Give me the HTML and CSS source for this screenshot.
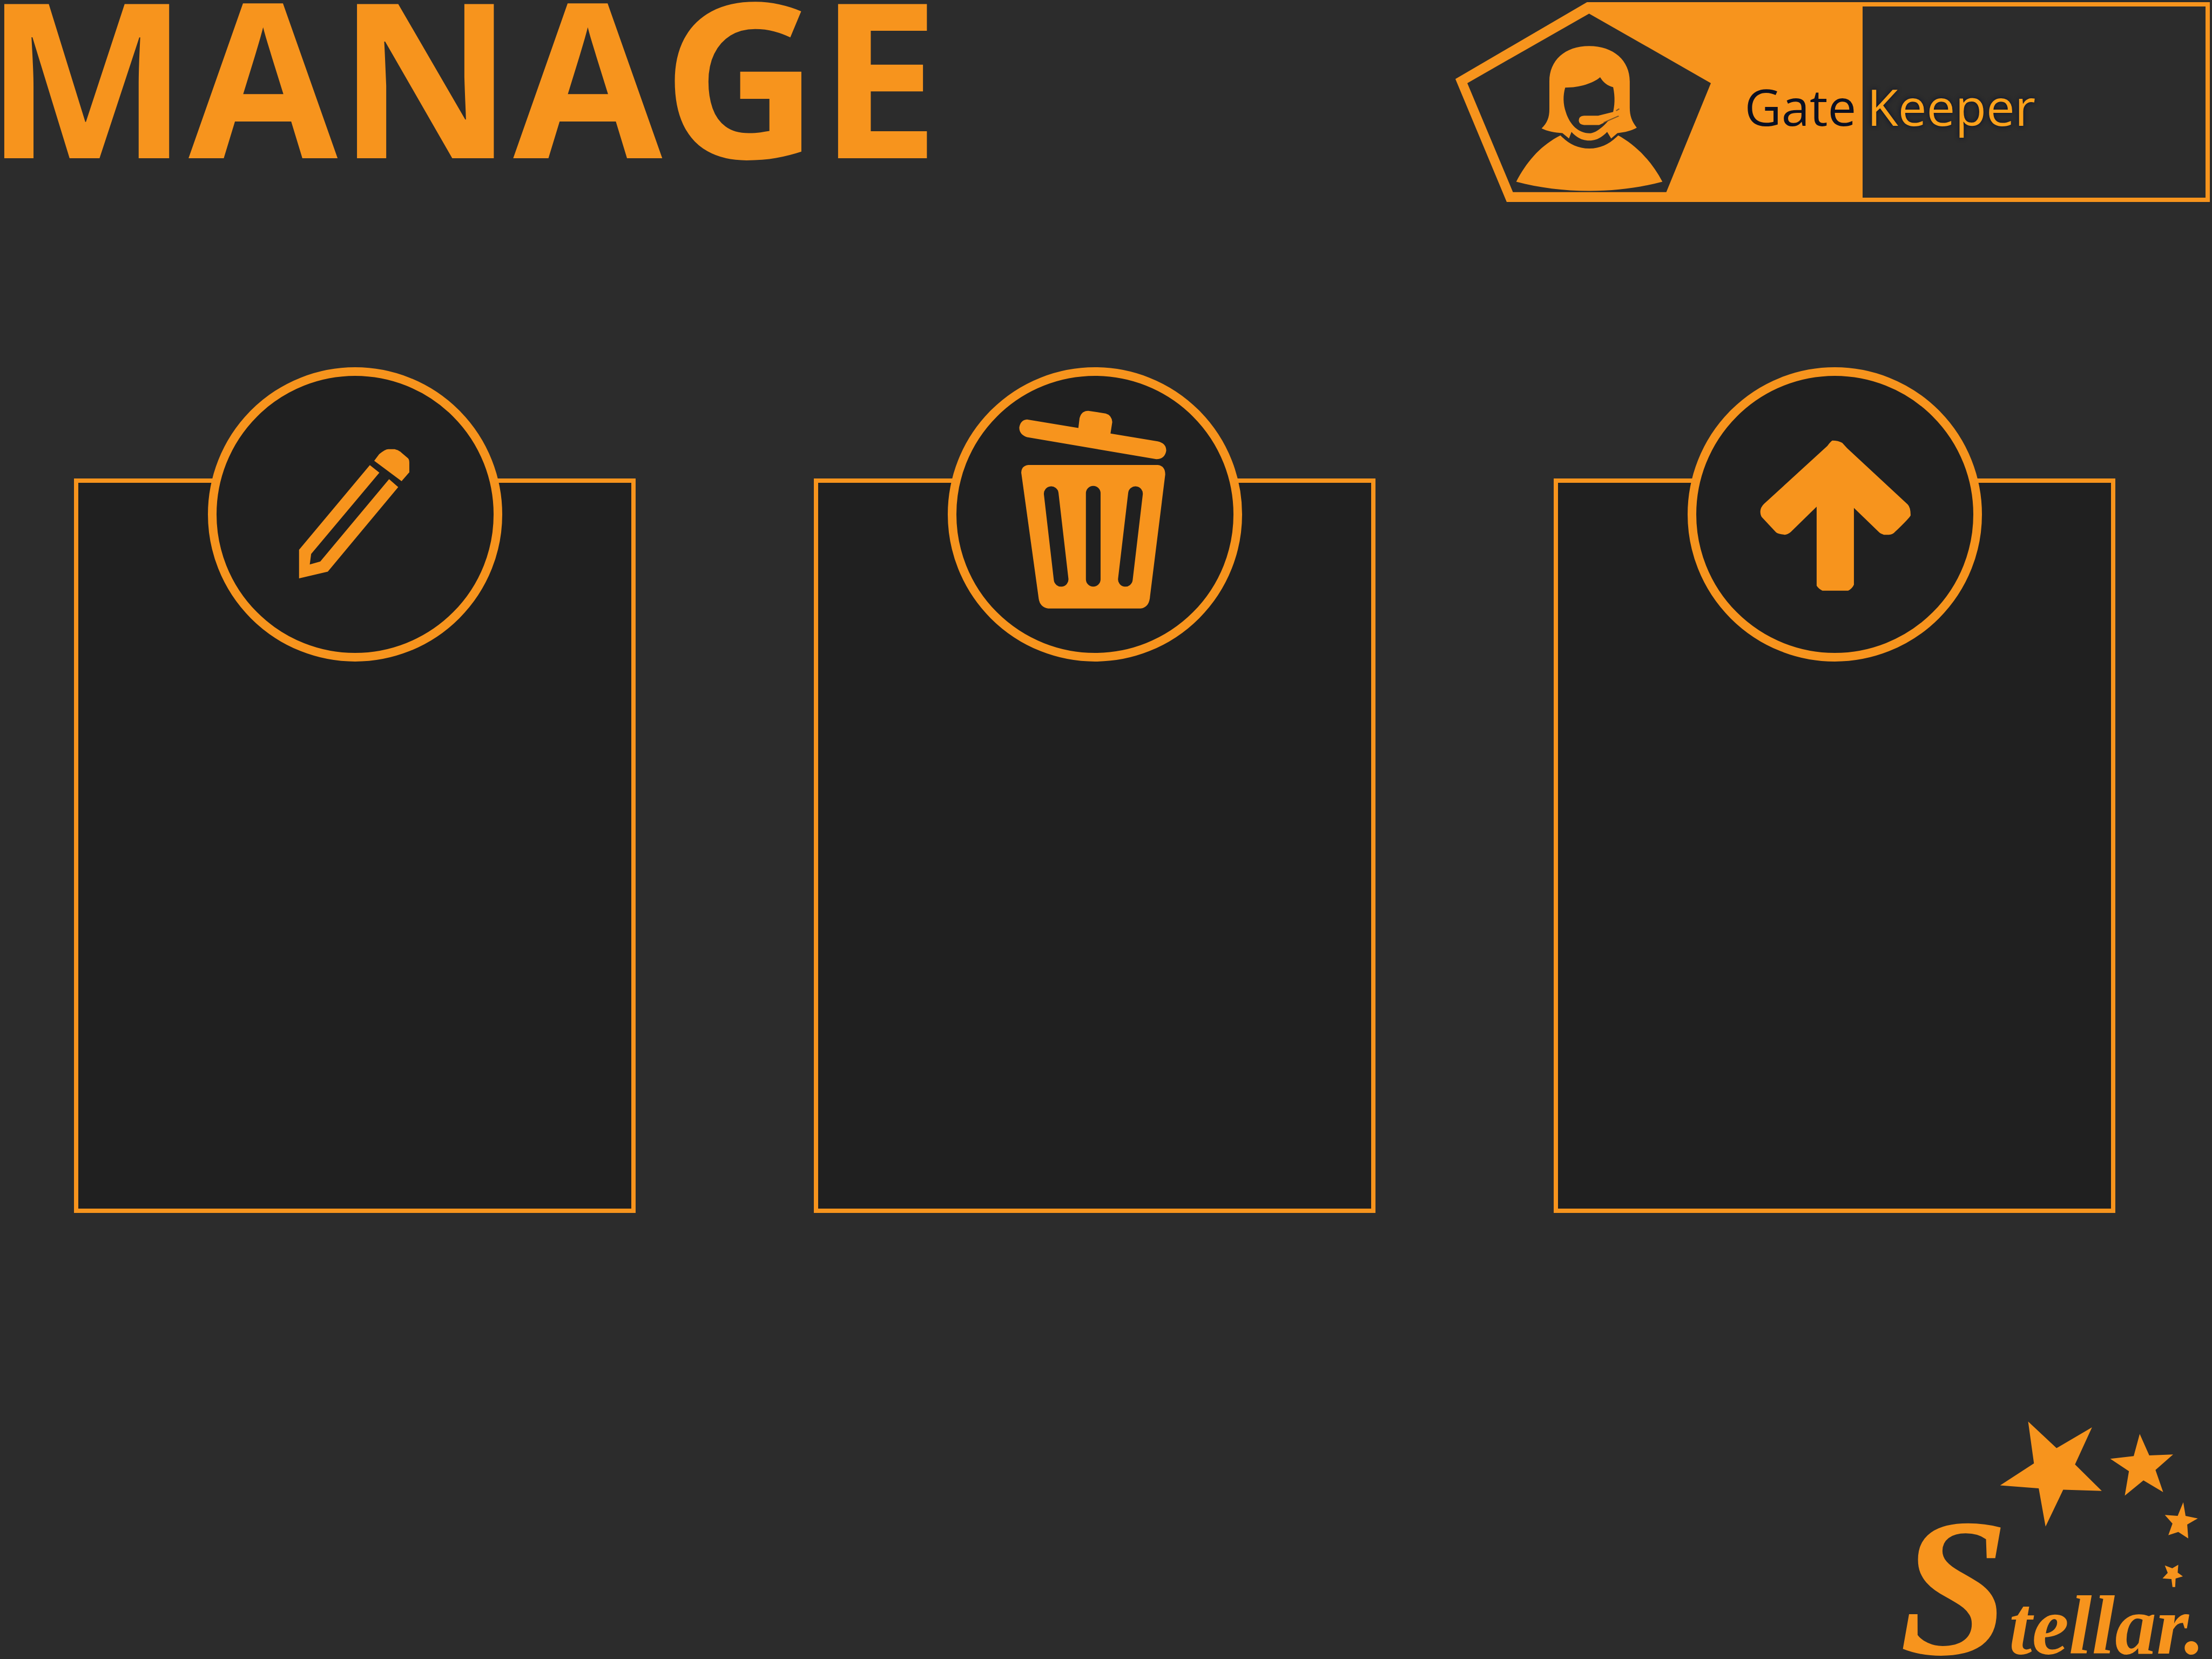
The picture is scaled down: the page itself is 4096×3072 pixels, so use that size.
FILE: index.html
```html
<!DOCTYPE html>
<html lang="en">
<head>
<meta charset="utf-8">
<title>Manage</title>
<link rel="stylesheet" href="styles.css">
</head>
<body>
<header class="header">
  <h1 class="title">MANAGE</h1>
  <div class="badge">
    <svg class="badge-emblem" viewBox="2809 4 494 385" preserveAspectRatio="none" aria-hidden="true">
      <path class="fill" d="M3063 4H3304V389H2908L2809 152Z"/>
      <path class="hole" d="M3067 26L3302 160L3216 370H2920L2832 160Z"/>
      <g transform="translate(2780 0) scale(.4847 .3333)">
        <path class="fill" d="M302 1050C345 930 400 840 478 782C510 830 545 858 593 858C640 858 675 830 708 782C780 840 840 930 884 1050C790 1085 700 1103 593 1103C490 1103 395 1085 302 1050Z"/>
        <path class="fill" d="M592 266C690 266 754 350 754 470V620C754 670 762 700 782 738C760 755 735 765 705 769L680 800L664 762C645 790 625 812 593 812C560 812 540 790 522 762L512 800L486 769C455 767 425 758 403 742C425 710 434 680 434 630V470C434 350 495 266 592 266Z"/>
        <path class="hole" d="M497 506C555 506 610 480 636 446C648 475 665 495 688 504C696 560 695 610 685 665C665 710 625 770 593 770C550 770 515 720 500 650C488 600 488 550 497 506Z"/>
        <path class="fill" d="M572 668H628L712 638V668L632 722H572Q551 720 551 695Q551 670 572 668Z"/>
        <path class="wire" d="M700 640L712 628M650 708L710 670"/>
      </g>
    </svg>
    <span class="badge-first">Gate</span>
    <span class="badge-last">Keeper</span>
  </div>
</header>

<main class="cards">
  <section class="card">
    <button class="action" type="button" aria-label="Edit">
      <svg class="icon" viewBox="94 92 1397 1397" aria-hidden="true">
        <path class="fill" d="M889 520L914 487Q945 462 960 462H992Q1008 465 1020 474L1060 508Q1066 515 1066 530V578L1027 623Z"/>
        <path class="fill" d="M867 542L915 580L571 990L564 1043L617 1028L964 613L1010 653L655 1079L510 1113V969Z"/>
      </svg>
    </button>
  </section>
  <section class="card">
    <button class="action" type="button" aria-label="Delete">
      <svg class="icon" viewBox="97 92 1397 1397" aria-hidden="true">
        <path class="fill" d="M453 312L712 355L718 305Q728 268 762 268L850 282Q880 290 883 325L874 383L1112 422Q1156 432 1155 470Q1148 512 1105 512L453 401Q414 388 414 352Q420 315 453 312Z"/>
        <path class="fill" d="M460 541H1112Q1150 545 1150 590L1072 1215Q1065 1260 1025 1265H560Q518 1258 512 1215L424 580Q425 545 460 541Z"/>
        <path class="slot" d="M575 686L625 1118M787 684V1118M1000 686L949 1118"/>
      </svg>
    </button>
  </section>
  <section class="card">
    <button class="action" type="button" aria-label="Upload">
      <svg class="icon" viewBox="79 92 1397 1397" aria-hidden="true">
        <path class="fill" d="M765 418Q795 418 815 430L840 457L1145 740Q1160 755 1160 795Q1158 805 1080 880Q1070 893 1050 893H1025Q1008 888 1000 880L874 758V1145Q865 1165 845 1175H715Q695 1165 686 1150V752L555 880Q540 893 525 893Q490 890 480 880L410 805Q402 795 402 775Q403 755 420 738L740 445Q755 425 765 418Z"/>
      </svg>
    </button>
  </section>
</main>

<footer class="footer">
  <svg class="logo" viewBox="0 0 627 480" role="img" aria-label="Stellar.">
    <g class="fill" transform="scale(.4 .3333)">
      <path d="M681 66L818 220L989 100L907 315L1036 468L850 461L765 674L732 453L546 436L709 308Z"/>
      <path d="M1219 138L1265 262L1380 257L1295 347L1332 475L1237 407L1147 495L1167 354L1077 282L1190 266Z"/>
      <path d="M1429 533L1440 612L1499 627L1448 662L1453 743L1405 705L1357 724L1377 657L1340 607L1402 612Z"/>
      <path d="M1340 899L1376 915L1405 895L1402 940L1427 962L1392 975L1390 1024L1377 1024L1372 978L1329 974L1354 942Z"/>
    </g>
    <text class="logo-text" x="24" y="470"><tspan class="logo-initial">S</tspan><tspan>tellar.</tspan></text>
  </svg>
</footer>
</body>
</html>
```
FILE: styles.css
```css
:root {
  --orange: #f7941d;
  --page: #2c2c2c;
  --panel: #202020;
}

* {
  box-sizing: border-box;
}

body {
  margin: 0;
  min-height: 100vh;
  display: flex;
  flex-direction: column;
  background: var(--page);
  color: var(--orange);
  font-family: "Open Sans", "Noto Sans", sans-serif;
}

.fill {
  fill: var(--orange);
}

.hole {
  fill: var(--page);
}

.header {
  display: flex;
  justify-content: space-between;
  align-items: flex-start;
}

.title {
  margin: 0 0 0 -28px;
  font-size: 400px;
  font-weight: 700;
  line-height: 276px;
}

.badge {
  display: grid;
  grid-template-columns: 474px 280px 1fr;
  width: 34.1%;
  height: 370px;
  margin: 4px 4px 0 0;
  font-size: 94px;
  line-height: 120px;
}

.badge-emblem {
  display: block;
  width: 100%;
  height: 100%;
}

.wire {
  fill: none;
  stroke: var(--page);
  stroke-width: 6;
  opacity: .6;
}

.badge-first,
.badge-last {
  display: flex;
  align-items: center;
  padding-top: 16px;
}

.badge-first {
  justify-content: flex-end;
  padding-right: 12px;
  background: var(--orange);
  color: #0b1022;
}

.badge-last {
  padding-left: 8px;
  border: 8px solid var(--orange);
  border-left-width: 0;
  color: #fda21b;
  text-shadow: 0 0 8px #08102a;
}

.cards {
  display: grid;
  grid-template-columns: repeat(3, 1fr);
  gap: 330px;
  margin-top: 512px;
  padding: 0 179px 0 137px;
}

.card {
  display: flex;
  flex-direction: column;
  align-items: center;
  min-height: 1360px;
  border: 8px solid var(--orange);
  background: var(--panel);
}

.action {
  width: 545px;
  height: 545px;
  margin-top: -214px;
  padding: 0;
  border: 16px solid var(--orange);
  border-radius: 50%;
  background: var(--panel);
  cursor: pointer;
}

.icon {
  display: block;
  width: 100%;
  height: 100%;
}

.slot {
  fill: none;
  stroke: var(--panel);
  stroke-width: 74;
  stroke-linecap: round;
}

.footer {
  display: flex;
  justify-content: flex-end;
  margin-top: auto;
}

.logo {
  display: block;
  width: 602px;
  height: 461px;
}

.logo-text {
  fill: var(--orange);
  font-family: "Liberation Serif", serif;
  font-size: 160px;
  font-style: italic;
  font-weight: 700;
}

.logo-initial {
  font-size: 380px;
}
```
